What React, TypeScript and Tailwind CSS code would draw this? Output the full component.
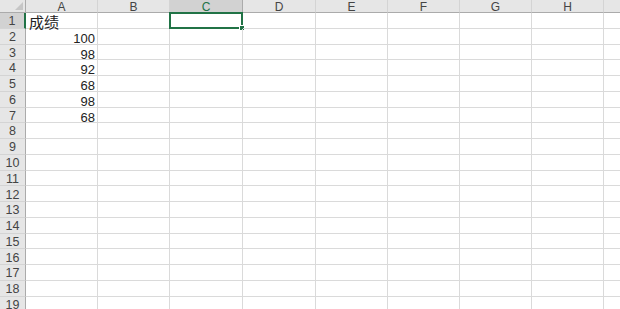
const COLS = [
  { label: "A", w: "w-[72px]" },
  { label: "B", w: "w-[72px]" },
  { label: "C", w: "w-[73px]" },
  { label: "D", w: "w-[73px]" },
  { label: "E", w: "w-[72px]" },
  { label: "F", w: "w-[72px]" },
  { label: "G", w: "w-[72px]" },
  { label: "H", w: "w-[72px]" },
  { label: "", w: "w-[40px]" },
]

const VALUES: Record<number, string> = {
  1: "成绩",
  2: "100",
  3: "98",
  4: "92",
  5: "68",
  6: "98",
  7: "68",
}

const ROWS = Array.from({ length: 19 }, (_, i) => i + 1)

export default function App() {
  return (
    <div className="h-[309px] w-[620px] overflow-hidden bg-white font-['Liberation_Sans',Arial,sans-serif] text-[#222]">
      {/* column header */}
      <div className="flex h-[13px]">
        <div className="relative w-[26px] shrink-0 border-r border-b border-[#ababab] bg-[#e6e6e6]">
          <div className="absolute right-[2px] bottom-[2px] h-0 w-0 border-b-[8px] border-l-[8px] border-b-[#c6c6c6] border-l-transparent" />
        </div>
        {COLS.map((c) => (
          <div
            key={c.label || "x"}
            className={`${c.w} flex shrink-0 items-center justify-center border-r border-b pt-[1px] text-[12px] leading-none ${
              c.label === "C"
                ? "border-r-[#ababab] border-b-[#217346] bg-[#d2d2d2] text-[#217346]"
                : "border-r-[#d4d4d4] border-b-[#ababab] bg-[#e6e6e6] text-[#444]"
            }`}
          >
            {c.label}
          </div>
        ))}
      </div>

      {ROWS.map((r) => (
        <div key={r} className="flex h-[15.78px]">
          <div
            className={`flex w-[26px] shrink-0 items-center justify-center border-b border-b-[#d4d4d4] pt-[2px] text-[12.5px] leading-none text-[#444] ${
              r === 1
                ? "border-r-2 border-r-[#217346] bg-[#d2d2d2]"
                : "border-r border-r-[#ababab] bg-[#e6e6e6]"
            }`}
          >
            {r}
          </div>
          {COLS.map((c, ci) => (
            <div
              key={ci}
              className={`${c.w} relative flex shrink-0 items-start border-r border-b border-[#dadada] text-[13px] leading-none ${
                r === 1 ? "justify-start pt-[1px] pl-[3px]" : "justify-end pt-[3px] pr-[2px]"
              }`}
            >
              {ci === 0 && r === 1 && (
                <span className="font-['Noto_Sans_CJK_SC',sans-serif] text-[15px] leading-none">
                  {VALUES[r]}
                </span>
              )}
              {ci === 0 && r > 1 && VALUES[r]}
              {c.label === "C" && r === 1 && (
                <div className="absolute -top-[1px] -left-[1px] h-[calc(100%+2px)] w-[calc(100%+2px)] border-2 border-[#217346]">
                  <div className="absolute -right-[4px] -bottom-[4px] h-[6px] w-[6px] border border-white bg-[#217346]" />
                </div>
              )}
            </div>
          ))}
        </div>
      ))}
    </div>
  )
}
